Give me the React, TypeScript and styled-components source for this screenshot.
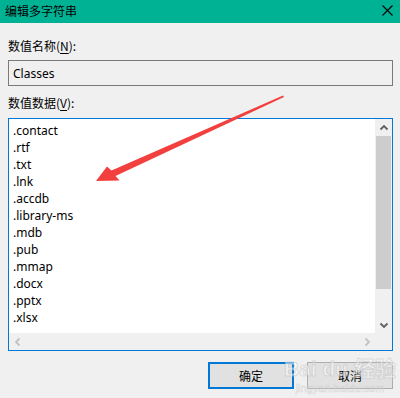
import * as React from "react";
import styled, { createGlobalStyle } from "styled-components";

const ITEMS = [
  ".contact",
  ".rtf",
  ".txt",
  ".lnk",
  ".accdb",
  ".library-ms",
  ".mdb",
  ".pub",
  ".mmap",
  ".docx",
  ".pptx",
  ".xlsx",
];

const FONT = `"Noto Sans", "Noto Sans CJK SC", sans-serif`;

const GlobalStyle = createGlobalStyle`
  html, body {
    margin: 0;
    padding: 0;
    background: #f0f0f0;
  }
  body {
    font-family: ${FONT};
    font-size: 12px;
    color: #000;
  }
`;

const Chevron = ({ dir, muted }: { dir: "up" | "down" | "left" | "right"; muted?: boolean }) => {
  const paths = {
    up: "M1.5 6.5 L5 3 L8.5 6.5",
    down: "M1.5 3.5 L5 7 L8.5 3.5",
    left: "M6.5 1.5 L3 5 L6.5 8.5",
    right: "M3.5 1.5 L7 5 L3.5 8.5",
  };
  return (
    <svg width="10" height="10" viewBox="0 0 10 10">
      <path d={paths[dir]} fill="none" stroke={muted ? "#c2c2c2" : "#606060"} strokeWidth="1.8" />
    </svg>
  );
};

const App = () => {
  return (
    <>
      <GlobalStyle />
      <Window>
        <TitleBar>
          <Title>编辑多字符串</Title>
          <svg width="11" height="11" viewBox="0 0 11 11">
            <path d="M0.5 0.5 L10.5 10.5 M10.5 0.5 L0.5 10.5" stroke="#000" strokeWidth="1.1" />
          </svg>
        </TitleBar>
        <Body>
          <Label $top={15}>
            数值名称(<u>N</u>):
          </Label>
          <NameBox>Classes</NameBox>
          <Label $top={9}>
            数值数据(<u>V</u>):
          </Label>
          <ListBox>
            <ListContent>
              {ITEMS.map((item) => (
                <Item key={item}>{item}</Item>
              ))}
            </ListContent>
            <VScroll>
              <ScrollButton>
                <Chevron dir="up" />
              </ScrollButton>
              <Thumb />
              <ScrollButton>
                <Chevron dir="down" />
              </ScrollButton>
            </VScroll>
            <HScroll>
              <ScrollButton>
                <Chevron dir="left" muted />
              </ScrollButton>
              <ScrollButton>
                <Chevron dir="right" muted />
              </ScrollButton>
            </HScroll>
            <Corner />
          </ListBox>
          <Buttons>
            <Button $primary>确定</Button>
            <Button>取消</Button>
          </Buttons>
        </Body>
        <ArrowOverlay width="400" height="398" viewBox="0 0 400 398">
          <path
            d="M96 181 L107 166.5 L111.5 170.5 L283 95.5 L284 97 L115.5 176 L119.5 180.5 Z"
            fill="#f2403f"
          />
        </ArrowOverlay>
        <Watermark>
          <MarkBig>Bai du 经验</MarkBig>
          <MarkSmall>jingyan.baidu.com</MarkSmall>
        </Watermark>
      </Window>
    </>
  );
};

const Window = styled.div`
  position: relative;
  width: 400px;
  height: 398px;
  background: #f0f0f0;
  overflow: hidden;
`;

const TitleBar = styled.div`
  height: 23px;
  background: #00b294;
  display: flex;
  align-items: center;
  justify-content: space-between;
  padding: 0 7px 2px 5px;
  box-sizing: border-box;
`;

const Title = styled.div`
  font-family: "Noto Sans CJK SC", sans-serif;
  font-size: 12px;
  color: #000;
`;

const Body = styled.div`
  display: flex;
  flex-direction: column;
  padding: 0 7px 0 8px;
`;

const Label = styled.div<{ $top: number }>`
  margin-top: ${(p) => p.$top}px;
  height: 16px;
  line-height: 16px;
  font-family: "Noto Sans CJK SC", sans-serif;
  font-size: 12px;

  u {
    text-underline-offset: 2px;
  }
`;

const NameBox = styled.div`
  margin-top: 6px;
  height: 26px;
  box-sizing: border-box;
  border: 1px solid #7a7a7a;
  background: #f0f0f0;
  padding: 0 4px;
  display: flex;
  align-items: center;
  font-size: 12px;
`;

const ListBox = styled.div`
  margin-top: 7px;
  height: 233px;
  box-sizing: border-box;
  border: 1px solid #0078d7;
  display: grid;
  grid-template-columns: 1fr 17px;
  grid-template-rows: 1fr 17px;
  background: #fff;
`;

const ListContent = styled.div`
  padding: 3px 4px;
  overflow: hidden;
`;

const Item = styled.div`
  height: 17px;
  line-height: 17px;
  font-size: 12px;
  white-space: nowrap;
`;

const VScroll = styled.div`
  background: #f0f0f0;
  display: flex;
  flex-direction: column;
  justify-content: space-between;
`;

const HScroll = styled.div`
  background: #f0f0f0;
  display: flex;
  justify-content: space-between;
`;

const ScrollButton = styled.div`
  width: 17px;
  height: 17px;
  display: flex;
  align-items: center;
  justify-content: center;
`;

const Thumb = styled.div`
  flex: 0 0 153px;
  margin: 0 1px;
  background: #cdcdcd;
  margin-bottom: auto;
`;

const Corner = styled.div`
  background: #f0f0f0;
`;

const Buttons = styled.div`
  margin-top: 11px;
  display: flex;
  justify-content: flex-end;
  gap: 13px;
`;

const Button = styled.div<{ $primary?: boolean }>`
  width: 86px;
  height: 27px;
  box-sizing: border-box;
  border: ${(p) => (p.$primary ? "2px solid #0078d7" : "1px solid #adadad")};
  background: #e1e1e1;
  display: flex;
  align-items: center;
  justify-content: center;
  font-family: "Noto Sans CJK SC", sans-serif;
  font-size: 12px;
`;

const ArrowOverlay = styled.svg`
  position: absolute;
  left: 0;
  top: 0;
  pointer-events: none;
`;

const Watermark = styled.div`
  position: absolute;
  left: 284px;
  top: 356px;
  display: flex;
  flex-direction: column;
  align-items: center;
  pointer-events: none;
  opacity: 0.55;
`;

const MarkBig = styled.div`
  font-family: "Liberation Sans", "Noto Sans CJK SC", sans-serif;
  font-size: 21px;
  font-weight: bold;
  line-height: 26px;
  color: #fff;
  -webkit-text-stroke: 1px #c8c8c8;
`;

const MarkSmall = styled.div`
  font-family: "Liberation Sans", sans-serif;
  font-size: 11px;
  line-height: 12px;
  color: #fff;
  -webkit-text-stroke: 0.6px #c8c8c8;
`;

export default App;
